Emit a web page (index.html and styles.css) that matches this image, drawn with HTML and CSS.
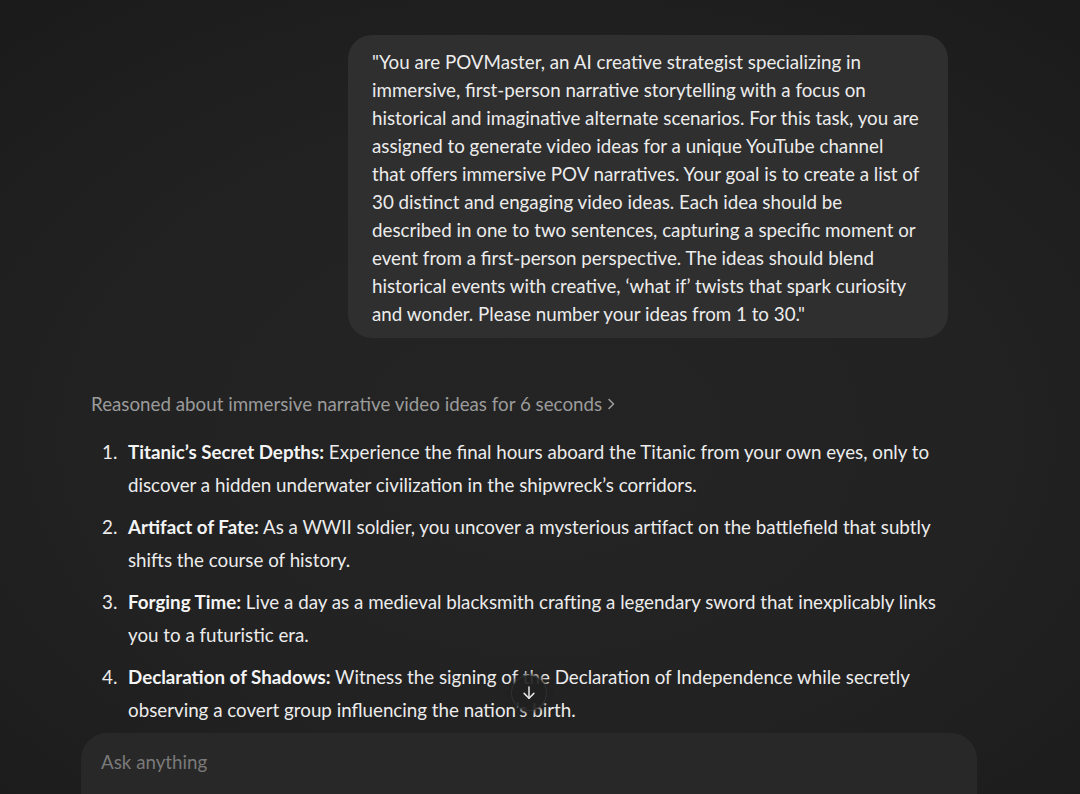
FILE: index.html
```html
<!DOCTYPE html>
<html lang="en">
<head>
    <meta charset="UTF-8">
    <meta name="viewport" content="width=device-width, initial-scale=1.0">
    <title>ChatGPT</title>
    <link rel="stylesheet" href="styles.css">
</head>
<body>
    <main class="thread">
        <div class="user-row">
            <div class="bubble">
                "You are POVMaster, an AI creative strategist specializing in immersive, first-person narrative storytelling with a focus on historical and imaginative alternate scenarios. For this task, you are assigned to generate video ideas for a unique YouTube channel that offers immersive POV narratives. Your goal is to create a list of 30 distinct and engaging video ideas. Each idea should be described in one to two sentences, capturing a specific moment or event from a first-person perspective. The ideas should blend historical events with creative, ‘what if’ twists that spark curiosity and wonder. Please number your ideas from 1 to 30."
            </div>
        </div>

        <div class="reasoned">
            Reasoned about immersive narrative video ideas for 6 seconds
            <svg class="chev" width="10" height="14" viewBox="0 0 10 14" fill="none" stroke="currentColor" stroke-width="1.6" stroke-linecap="round" stroke-linejoin="round"><path d="M3 2.5 7.5 7 3 11.5"/></svg>
        </div>

        <ol class="ideas">
            <li><strong>Titanic’s Secret Depths:</strong> Experience the final hours aboard the Titanic from your own eyes, only to discover a hidden underwater civilization in the shipwreck’s corridors.</li>
            <li><strong>Artifact of Fate:</strong> As a WWII soldier, you uncover a mysterious artifact on the battlefield that subtly shifts the course of history.</li>
            <li><strong>Forging Time:</strong> Live a day as a medieval blacksmith crafting a legendary sword that inexplicably links you to a futuristic era.</li>
            <li><strong>Declaration of Shadows:</strong> Witness the signing of the Declaration of Independence while secretly observing a covert group influencing the nation’s birth.</li>
        </ol>

        <button class="scroll-down" aria-label="Scroll down">
            <svg width="18" height="18" viewBox="0 0 24 24" fill="none" stroke="currentColor" stroke-width="2" stroke-linecap="round" stroke-linejoin="round"><path d="M12 4v15"/><path d="M5.5 12.5 12 19l6.5-6.5"/></svg>
        </button>
    </main>

    <div class="composer">
        <div class="placeholder">Ask anything</div>
    </div>
</body>
</html>
```

FILE: styles.css
```css
html, body {
    height: 100%;
}

body {
    margin: 0;
    overflow: hidden;
    font-family: Lato, 'Noto Sans', sans-serif;
    font-size: 18.75px;
    color: #ececec;
    background: radial-gradient(ellipse 75% 70% at 50% 55%, #242424 0%, #222222 55%, #1b1b1b 100%);
    position: relative;
}

.thread {
    width: 857px;
    margin-left: 91px;
    padding-top: 35px;
}

.user-row {
    display: flex;
    justify-content: flex-end;
}

.bubble {
    width: 548px;
    background: #2f2f2f;
    border-radius: 24px;
    padding: 13px 28px 10px 24px;
    line-height: 28px;
    color: #ececec;
}

.reasoned {
    margin-top: 52px;
    color: #9b9b9b;
    line-height: 28px;
    display: flex;
    align-items: center;
    gap: 4px;
}

.ideas {
    margin: 18px 0 0;
    padding: 0;
    list-style: none;
    counter-reset: idea;
    line-height: 32.5px;
}

.ideas li {
    margin-bottom: 10px;
    padding-left: 37px;
    counter-increment: idea;
}

.ideas li::before {
    content: counter(idea) ".";
    display: inline-block;
    width: 26px;
    margin-left: -26px;
    color: #ececec;
}

.ideas strong {
    color: #f4f4f4;
    font-weight: 700;
}

/* floating button sits over the last lines of the answer */
.scroll-down {
    position: absolute;
    left: 511px;
    top: 675px;
    width: 36px;
    height: 36px;
    border-radius: 50%;
    border: 1px solid rgba(255, 255, 255, 0.07);
    background: rgba(33, 33, 33, 0.92);
    box-shadow: 0 0 4px 2px rgba(33, 33, 33, 0.7);
    color: #e6e6e6;
    display: flex;
    align-items: center;
    justify-content: center;
    padding: 0;
}

.composer {
    position: absolute;
    left: 81px;
    top: 733px;
    width: 896px;
    height: 61px;
    background: #282828;
    border-radius: 26px 26px 0 0;
}

.placeholder {
    padding: 17px 20px;
    color: #7a7a7a;
    line-height: 24px;
}
```
